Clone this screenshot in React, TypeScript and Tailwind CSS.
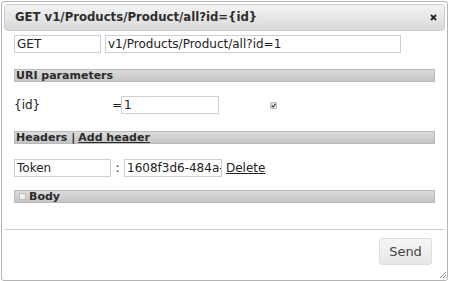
import React from "react";

const font = { fontFamily: '"DejaVu Sans", Verdana, sans-serif' };

const Bar = ({ children }: { children: React.ReactNode }) => (
  <div className="h-[13px] w-[421px] border border-[#b9b9b9] bg-gradient-to-b from-[#dcdcdc] to-[#c5c5c5] flex items-center pl-[1px] text-[11px] font-bold leading-none text-[#2b2b2b]">
    {children}
  </div>
);

const Field = ({ value, className }: { value: string; className: string }) => (
  <input
    readOnly
    value={value}
    className={`h-[18px] border border-[#cfcfcf] bg-white pl-[2px] text-[12px] leading-none text-[#222] outline-none ${className}`}
    style={font}
  />
);

export default function App() {
  return (
    <div className="w-[450px] h-[281px] bg-white" style={font}>
      <div className="relative ml-[1px] pt-[1px] w-[447px] h-[281px]">
        <div className="h-[280px] border border-[#b4b4b4] rounded-[3px] p-[2px] flex flex-col">
          {/* title */}
          <div className="h-[27px] border border-[#cccccc] rounded-[4px] bg-gradient-to-b from-[#f4f4f4] to-[#d9d9d9] flex items-center justify-between pl-[10px] pr-[7px]">
            <span className="text-[11.7px] font-bold text-[#2e2e2e] leading-none">
              GET v1/Products/Product/all?id={"{id}"}
            </span>
            <svg width="7" height="7" viewBox="0 0 7 7">
              <path d="M1 1 L6 6 M6 1 L1 6" stroke="#222" strokeWidth="1.8" />
            </svg>
          </div>

          <div className="flex-1 pl-[10px]">
            <div className="mt-[4px] flex gap-[4px]">
              <Field value="GET" className="w-[87px]" />
              <Field value="v1/Products/Product/all?id=1" className="w-[296px]" />
            </div>

            <div className="mt-[16px]">
              <Bar>URI parameters</Bar>
            </div>

            <div className="mt-[14px] flex items-center text-[12px] text-[#222]">
              <span className="w-[98px]">{"{id}"}</span>
              <span className="w-[9px]">=</span>
              <Field value="1" className="w-[98px]" />
              <span className="ml-[51px] w-[7px] h-[7px] rounded-[1px] bg-[#dedede] border border-[#bdbdbd] flex items-center justify-center">
                <svg width="5" height="5" viewBox="0 0 5 5">
                  <path d="M0.6 2.6 L2 4 L4.5 0.8" stroke="#333" strokeWidth="1.1" fill="none" />
                </svg>
              </span>
            </div>

            <div className="mt-[17px]">
              <Bar>
                Headers | <span className="underline ml-[3px]">Add header</span>
              </Bar>
            </div>

            <div className="mt-[15px] flex items-center text-[12px] text-[#222]">
              <Field value="Token" className="w-[97px]" />
              <span className="w-[13px] text-center">:</span>
              <Field value="1608f3d6-484a-4c1e-9a2b" className="w-[98px]" />
              <span className="ml-[4px] underline">Delete</span>
            </div>

            <div className="mt-[13px]">
              <Bar>
                <span className="ml-[3px] mr-[3px] w-[7px] h-[7px] border border-[#bdbdbd] bg-[#eeeeee]" />
                Body
              </Bar>
            </div>
          </div>

          <div className="h-[49px] border-t border-[#cfcfcf] flex justify-end pt-[8px] pr-[13px]">
            <button className="w-[53px] h-[27px] rounded-[3px] border border-[#dddddd] bg-gradient-to-b from-[#f6f6f6] to-[#e6e6e6] text-[13px] text-[#444]">
              Send
            </button>
          </div>
        </div>
        <svg className="absolute right-[1px] bottom-[2px]" width="9" height="9" viewBox="0 0 9 9">
          <path d="M8 2 L2 8 M8 5 L5 8 M8 7.5 L7.5 8" stroke="#777" strokeWidth="0.8" />
        </svg>
      </div>
    </div>
  );
}
